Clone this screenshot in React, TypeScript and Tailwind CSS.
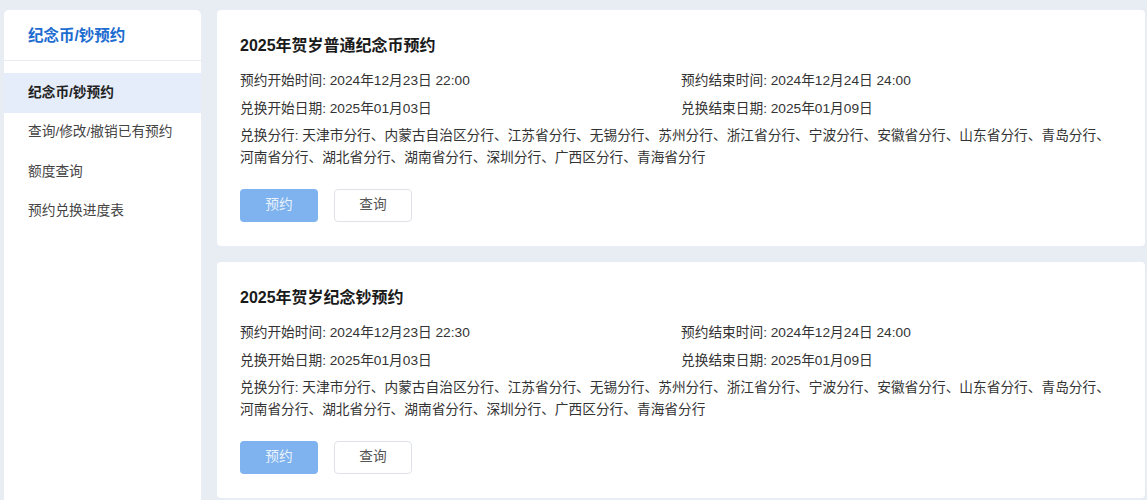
const FONT = { fontFamily: '"Liberation Sans", "Noto Sans CJK SC", sans-serif' }

const menu = ['纪念币/钞预约', '查询/修改/撤销已有预约', '额度查询', '预约兑换进度表']

const branches =
  '天津市分行、内蒙古自治区分行、江苏省分行、无锡分行、苏州分行、浙江省分行、宁波分行、安徽省分行、山东省分行、青岛分行、河南省分行、湖北省分行、湖南省分行、深圳分行、广西区分行、青海省分行'

const items = [
  {
    title: '2025年贺岁普通纪念币预约',
    start: '2024年12月23日 22:00',
    end: '2024年12月24日 24:00',
    exStart: '2025年01月03日',
    exEnd: '2025年01月09日',
  },
  {
    title: '2025年贺岁纪念钞预约',
    start: '2024年12月23日 22:30',
    end: '2024年12月24日 24:00',
    exStart: '2025年01月03日',
    exEnd: '2025年01月09日',
  },
]

function Sidebar() {
  return (
    <aside className="w-[197px] shrink-0 rounded-t-[5px] bg-white">
      <div className="flex h-[51px] items-center border-b border-[#e8ecf1] px-6 pt-[2px]">
        <span className="text-[15.5px] font-bold text-[#1d6ccf]">纪念币/钞预约</span>
      </div>
      <nav className="mt-[12px]">
        {menu.map((m, i) => (
          <div
            key={m}
            className={
              i === 0
                ? 'flex h-[39.5px] items-center bg-[#e4edf9] px-6 pt-[1px] text-[13.7px] font-bold text-[#222]'
                : 'flex h-[39.5px] items-center px-6 pt-[1px] text-[13.7px] text-[#444]'
            }
          >
            {m}
          </div>
        ))}
      </nav>
    </aside>
  )
}

function Card({ item }: { item: (typeof items)[number] }) {
  return (
    <section className="rounded-[4px] bg-white px-[23px] pb-[24px] pt-[25px]">
      <h2 className="text-[16px] font-bold leading-[22px] text-[#1a1a1a]">{item.title}</h2>
      <div className="mt-[13px] grid grid-cols-2 gap-y-[6px] text-[13.7px] leading-[22px] text-[#333]">
        <div>预约开始时间: {item.start}</div>
        <div>预约结束时间: {item.end}</div>
        <div>兑换开始日期: {item.exStart}</div>
        <div>兑换结束日期: {item.exEnd}</div>
      </div>
      <p className="mt-[5px] text-[13.7px] leading-[22px] text-[#333]">兑换分行: {branches}</p>
      <div className="mt-[20px] flex gap-4">
        <button className="h-[33px] w-[78px] rounded-[4px] bg-[#7fb3ef] text-[13.7px] text-[#eaf2fd]">
          预约
        </button>
        <button className="h-[33px] w-[78px] rounded-[4px] border border-[#dfe3e8] bg-white text-[13.7px] text-[#555]">
          查询
        </button>
      </div>
    </section>
  )
}

export default function App() {
  return (
    <div className="flex h-[500px] gap-4 overflow-hidden bg-[#e8edf3] pl-[4px] pr-[2px] pt-[10px]" style={FONT}>
      <Sidebar />
      <main className="flex flex-1 flex-col gap-4">
        {items.map((it) => (
          <Card key={it.title} item={it} />
        ))}
      </main>
    </div>
  )
}
